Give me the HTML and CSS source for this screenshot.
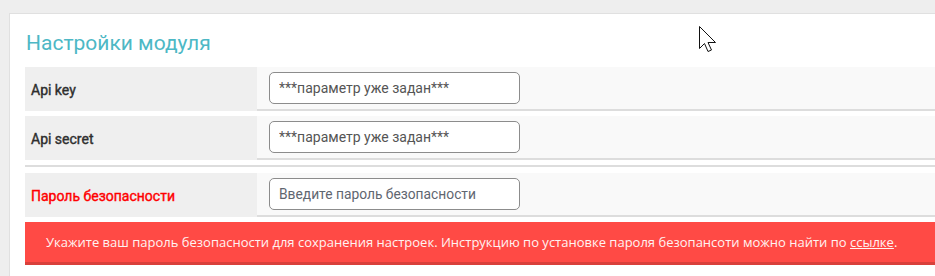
FILE: index.html
```html
<!DOCTYPE html>
<html lang="ru">
<head>
<meta charset="utf-8">
<title>Настройки модуля</title>
<link rel="stylesheet" href="styles.css">
</head>
<body>
<div class="card">
  <h2 class="title">Настройки модуля</h2>
  <div class="row">
    <div class="label">Api key</div>
    <div class="value"><input class="field" type="text" value="***параметр уже задан***"></div>
  </div>
  <div class="row">
    <div class="label">Api secret</div>
    <div class="value"><input class="field" type="text" value="***параметр уже задан***"></div>
  </div>
  <div class="sep"></div>
  <div class="row">
    <div class="label label-red">Пароль безопасности</div>
    <div class="value"><input class="field" type="password" placeholder="Введите пароль безопасности"></div>
  </div>
  <div class="alert">Укажите ваш пароль безопасности для сохранения настроек. Инструкцию по установке пароля безопансоти можно найти по <a href="#" class="alert-link">ссылке</a>.</div>
</div>
<svg class="cursor" width="20" height="28" viewBox="0 0 20 28">
  <path d="M0.5 0.5 L0.5 22.5 L5.5 17.5 L9 25.5 L12.5 24 L9 16.5 L16.5 16.5 Z" fill="#fff" stroke="#111" stroke-width="1"/>
</svg>
</body>
</html>
```
FILE: styles.css
```css
html, body {
  margin: 0;
  padding: 0;
  overflow: hidden;
}
body {
  background: #eeeeee;
  font-family: Roboto, "Noto Sans", sans-serif;
  position: relative;
  height: 276px;
}
.card {
  margin: 13px 0 0 9px;
  width: 960px;
  background: #ffffff;
  border: 1px solid #e0e0e0;
  padding: 14px 15px 20px 15px;
  box-sizing: border-box;
}
.title {
  margin: 0 0 9px 1px;
  font-weight: 400;
  font-size: 21px;
  line-height: 30px;
  color: #4db8c5;
}
.row {
  display: flex;
  height: 44px;
  margin-bottom: 5px;
}
.label {
  width: 232px;
  flex: none;
  background: #efefef;
  padding-left: 6px;
  padding-top: 1px;
  display: flex;
  align-items: center;
  font-size: 14px;
  font-weight: 400;
  -webkit-text-stroke: 0.4px currentColor;
  color: #2f2f2f;
  box-sizing: border-box;
}
.label-red {
  color: #ff0000;
}
.value {
  flex: 1;
  background: #f9f9f9;
  border-bottom: 2px solid #dddddd;
  padding: 5px 12px;
  box-sizing: border-box;
}
.field {
  display: block;
  width: 251px;
  height: 32px;
  box-sizing: border-box;
  border: 1px solid #8c8c8c;
  border-radius: 5px;
  background: #ffffff;
  padding: 0 9px;
  font-family: Roboto, "Noto Sans", sans-serif;
  font-size: 14px;
  color: #555555;
  outline: none;
}
.field::placeholder {
  font-size: 13.8px;
  color: #5f6670;
}
.sep {
  height: 2px;
  background: #dddddd;
  margin: 0 0 6px 0;
}
.alert {
  background: #ff4a45;
  border-bottom: 3px solid #d9403b;
  height: 43px;
  box-sizing: border-box;
  padding: 0 21px;
  font-family: "Open Sans", sans-serif;
  font-size: 13px;
  line-height: 40px;
  white-space: nowrap;
  color: #fff3f2;
}
.alert-link {
  color: #fff3f2;
  text-decoration: underline;
}
.cursor {
  position: absolute;
  left: 699px;
  top: 26px;
}
```
